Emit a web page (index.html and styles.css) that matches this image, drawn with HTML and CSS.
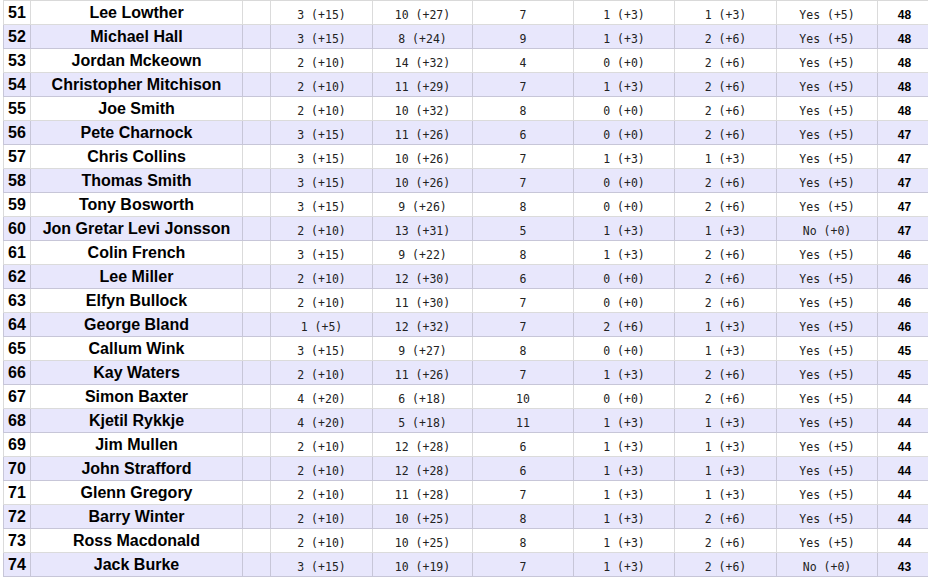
FILE: index.html
```html
<!DOCTYPE html>
<html lang="en">
<head>
<meta charset="utf-8">
<title>Standings</title>
<link rel="stylesheet" href="styles.css">
</head>
<body>
<div class="sheet">
  <div class="row"><div class="c rank">51</div><div class="c name">Lee Lowther</div><div class="c"></div><div class="c m">3 (+15)</div><div class="c m">10 (+27)</div><div class="c m">7</div><div class="c m">1 (+3)</div><div class="c m">1 (+3)</div><div class="c m">Yes (+5)</div><div class="c tot">48</div></div>
  <div class="row alt"><div class="c rank">52</div><div class="c name">Michael Hall</div><div class="c"></div><div class="c m">3 (+15)</div><div class="c m">8 (+24)</div><div class="c m">9</div><div class="c m">1 (+3)</div><div class="c m">2 (+6)</div><div class="c m">Yes (+5)</div><div class="c tot">48</div></div>
  <div class="row"><div class="c rank">53</div><div class="c name">Jordan Mckeown</div><div class="c"></div><div class="c m">2 (+10)</div><div class="c m">14 (+32)</div><div class="c m">4</div><div class="c m">0 (+0)</div><div class="c m">2 (+6)</div><div class="c m">Yes (+5)</div><div class="c tot">48</div></div>
  <div class="row alt"><div class="c rank">54</div><div class="c name">Christopher Mitchison</div><div class="c"></div><div class="c m">2 (+10)</div><div class="c m">11 (+29)</div><div class="c m">7</div><div class="c m">1 (+3)</div><div class="c m">2 (+6)</div><div class="c m">Yes (+5)</div><div class="c tot">48</div></div>
  <div class="row"><div class="c rank">55</div><div class="c name">Joe Smith</div><div class="c"></div><div class="c m">2 (+10)</div><div class="c m">10 (+32)</div><div class="c m">8</div><div class="c m">0 (+0)</div><div class="c m">2 (+6)</div><div class="c m">Yes (+5)</div><div class="c tot">48</div></div>
  <div class="row alt"><div class="c rank">56</div><div class="c name">Pete Charnock</div><div class="c"></div><div class="c m">3 (+15)</div><div class="c m">11 (+26)</div><div class="c m">6</div><div class="c m">0 (+0)</div><div class="c m">2 (+6)</div><div class="c m">Yes (+5)</div><div class="c tot">47</div></div>
  <div class="row"><div class="c rank">57</div><div class="c name">Chris Collins</div><div class="c"></div><div class="c m">3 (+15)</div><div class="c m">10 (+26)</div><div class="c m">7</div><div class="c m">1 (+3)</div><div class="c m">1 (+3)</div><div class="c m">Yes (+5)</div><div class="c tot">47</div></div>
  <div class="row alt"><div class="c rank">58</div><div class="c name">Thomas Smith</div><div class="c"></div><div class="c m">3 (+15)</div><div class="c m">10 (+26)</div><div class="c m">7</div><div class="c m">0 (+0)</div><div class="c m">2 (+6)</div><div class="c m">Yes (+5)</div><div class="c tot">47</div></div>
  <div class="row"><div class="c rank">59</div><div class="c name">Tony Bosworth</div><div class="c"></div><div class="c m">3 (+15)</div><div class="c m">9 (+26)</div><div class="c m">8</div><div class="c m">0 (+0)</div><div class="c m">2 (+6)</div><div class="c m">Yes (+5)</div><div class="c tot">47</div></div>
  <div class="row alt"><div class="c rank">60</div><div class="c name">Jon Gretar Levi Jonsson</div><div class="c"></div><div class="c m">2 (+10)</div><div class="c m">13 (+31)</div><div class="c m">5</div><div class="c m">1 (+3)</div><div class="c m">1 (+3)</div><div class="c m">No (+0)</div><div class="c tot">47</div></div>
  <div class="row"><div class="c rank">61</div><div class="c name">Colin French</div><div class="c"></div><div class="c m">3 (+15)</div><div class="c m">9 (+22)</div><div class="c m">8</div><div class="c m">1 (+3)</div><div class="c m">2 (+6)</div><div class="c m">Yes (+5)</div><div class="c tot">46</div></div>
  <div class="row alt"><div class="c rank">62</div><div class="c name">Lee Miller</div><div class="c"></div><div class="c m">2 (+10)</div><div class="c m">12 (+30)</div><div class="c m">6</div><div class="c m">0 (+0)</div><div class="c m">2 (+6)</div><div class="c m">Yes (+5)</div><div class="c tot">46</div></div>
  <div class="row"><div class="c rank">63</div><div class="c name">Elfyn Bullock</div><div class="c"></div><div class="c m">2 (+10)</div><div class="c m">11 (+30)</div><div class="c m">7</div><div class="c m">0 (+0)</div><div class="c m">2 (+6)</div><div class="c m">Yes (+5)</div><div class="c tot">46</div></div>
  <div class="row alt"><div class="c rank">64</div><div class="c name">George Bland</div><div class="c"></div><div class="c m">1 (+5)</div><div class="c m">12 (+32)</div><div class="c m">7</div><div class="c m">2 (+6)</div><div class="c m">1 (+3)</div><div class="c m">Yes (+5)</div><div class="c tot">46</div></div>
  <div class="row"><div class="c rank">65</div><div class="c name">Callum Wink</div><div class="c"></div><div class="c m">3 (+15)</div><div class="c m">9 (+27)</div><div class="c m">8</div><div class="c m">0 (+0)</div><div class="c m">1 (+3)</div><div class="c m">Yes (+5)</div><div class="c tot">45</div></div>
  <div class="row alt"><div class="c rank">66</div><div class="c name">Kay Waters</div><div class="c"></div><div class="c m">2 (+10)</div><div class="c m">11 (+26)</div><div class="c m">7</div><div class="c m">1 (+3)</div><div class="c m">2 (+6)</div><div class="c m">Yes (+5)</div><div class="c tot">45</div></div>
  <div class="row"><div class="c rank">67</div><div class="c name">Simon Baxter</div><div class="c"></div><div class="c m">4 (+20)</div><div class="c m">6 (+18)</div><div class="c m">10</div><div class="c m">0 (+0)</div><div class="c m">2 (+6)</div><div class="c m">Yes (+5)</div><div class="c tot">44</div></div>
  <div class="row alt"><div class="c rank">68</div><div class="c name">Kjetil Rykkje</div><div class="c"></div><div class="c m">4 (+20)</div><div class="c m">5 (+18)</div><div class="c m">11</div><div class="c m">1 (+3)</div><div class="c m">1 (+3)</div><div class="c m">Yes (+5)</div><div class="c tot">44</div></div>
  <div class="row"><div class="c rank">69</div><div class="c name">Jim Mullen</div><div class="c"></div><div class="c m">2 (+10)</div><div class="c m">12 (+28)</div><div class="c m">6</div><div class="c m">1 (+3)</div><div class="c m">1 (+3)</div><div class="c m">Yes (+5)</div><div class="c tot">44</div></div>
  <div class="row alt"><div class="c rank">70</div><div class="c name">John Strafford</div><div class="c"></div><div class="c m">2 (+10)</div><div class="c m">12 (+28)</div><div class="c m">6</div><div class="c m">1 (+3)</div><div class="c m">1 (+3)</div><div class="c m">Yes (+5)</div><div class="c tot">44</div></div>
  <div class="row"><div class="c rank">71</div><div class="c name">Glenn Gregory</div><div class="c"></div><div class="c m">2 (+10)</div><div class="c m">11 (+28)</div><div class="c m">7</div><div class="c m">1 (+3)</div><div class="c m">1 (+3)</div><div class="c m">Yes (+5)</div><div class="c tot">44</div></div>
  <div class="row alt"><div class="c rank">72</div><div class="c name">Barry Winter</div><div class="c"></div><div class="c m">2 (+10)</div><div class="c m">10 (+25)</div><div class="c m">8</div><div class="c m">1 (+3)</div><div class="c m">2 (+6)</div><div class="c m">Yes (+5)</div><div class="c tot">44</div></div>
  <div class="row"><div class="c rank">73</div><div class="c name">Ross Macdonald</div><div class="c"></div><div class="c m">2 (+10)</div><div class="c m">10 (+25)</div><div class="c m">8</div><div class="c m">1 (+3)</div><div class="c m">2 (+6)</div><div class="c m">Yes (+5)</div><div class="c tot">44</div></div>
  <div class="row alt"><div class="c rank">74</div><div class="c name">Jack Burke</div><div class="c"></div><div class="c m">3 (+15)</div><div class="c m">10 (+19)</div><div class="c m">7</div><div class="c m">1 (+3)</div><div class="c m">2 (+6)</div><div class="c m">No (+0)</div><div class="c tot">43</div></div>
</div>
</body>
</html>
```
FILE: styles.css
```css
html, body {
  margin: 0;
  padding: 0;
  background: #ffffff;
  overflow: hidden;
}

body {
  padding-left: 3px;
  font-family: "Liberation Sans", Arial, sans-serif;
}

.sheet {
  width: 929px;
  border-top: 1px solid #d9d9d9;
}

.row {
  display: grid;
  grid-template-columns: 27px 212px 28px 102px 100px 101px 101px 102px 101px 54px;
  height: 24px;
  background: #ffffff;
}

.row.alt {
  background: #e8e7fc;
}

.c {
  box-sizing: border-box;
  height: 24px;
  border-left: 1px solid rgba(0, 0, 0, 0.14);
  border-bottom: 1px solid rgba(0, 0, 0, 0.14);
  display: flex;
  align-items: flex-end;
  justify-content: center;
  padding-bottom: 2px;
  white-space: nowrap;
  overflow: hidden;
  color: #000;
}

.rank {
  justify-content: flex-start;
  padding-left: 4px;
  font-weight: bold;
  font-size: 16px;
  line-height: 18px;
}

.name {
  font-weight: bold;
  font-size: 16px;
  line-height: 18px;
}

.m {
  font-family: "DejaVu Sans Mono", monospace;
  font-size: 11.5px;
  line-height: 14px;
  color: #222;
}

.tot {
  font-weight: bold;
  font-size: 12px;
  line-height: 14px;
}
```
